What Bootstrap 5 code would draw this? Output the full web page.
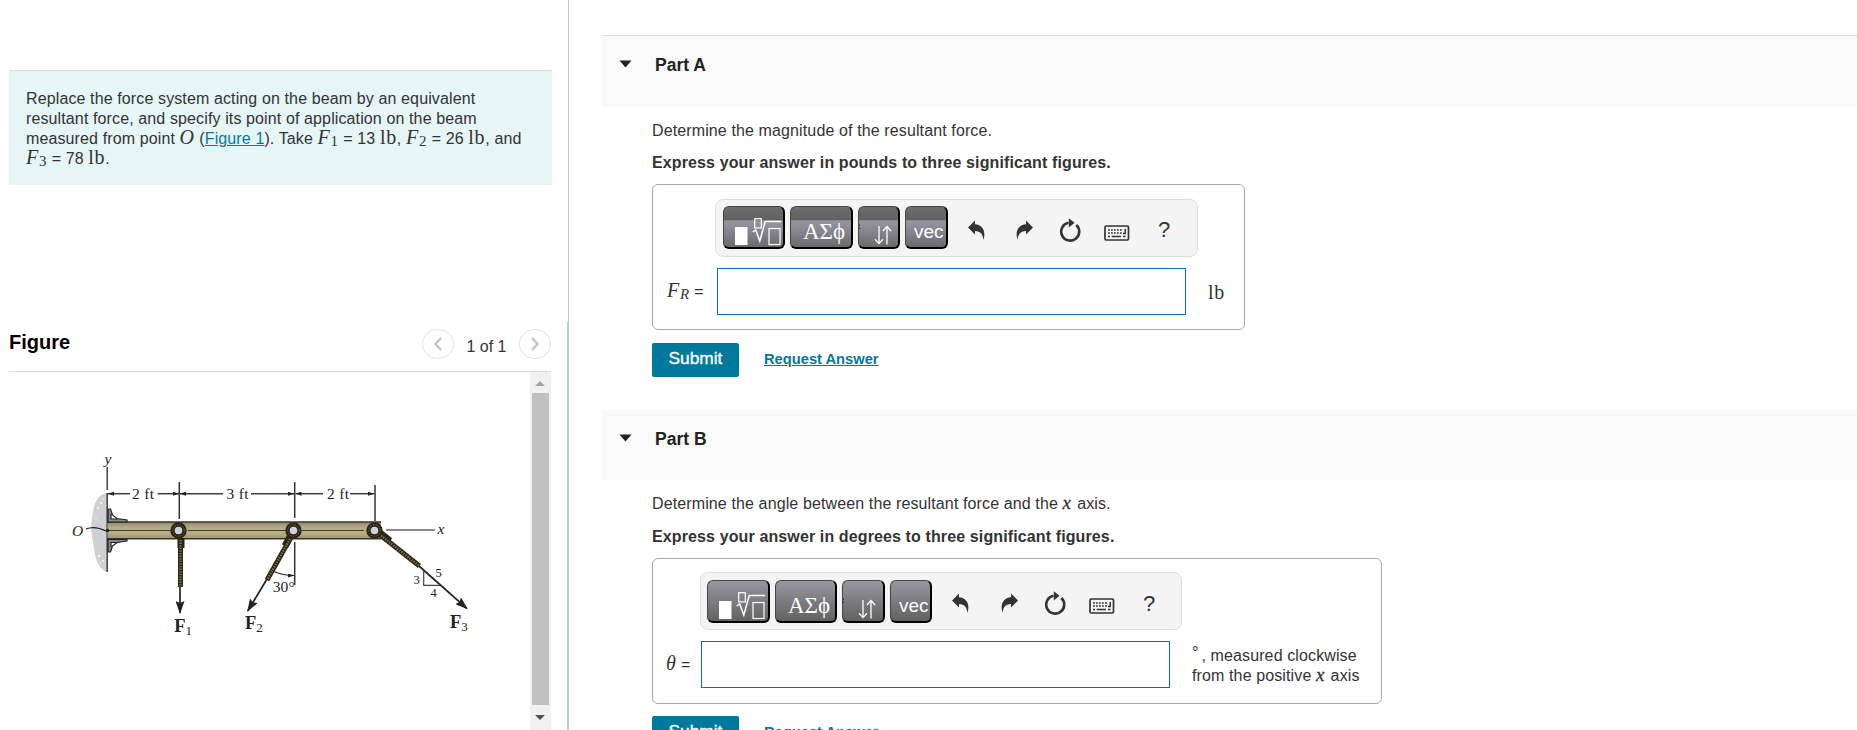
<!DOCTYPE html>
<html lang="en">
<head>
  <meta charset="UTF-8" />
  <title>Equivalent Resultant Force</title>
  <meta name="viewport" content="width=device-width, initial-scale=1.0" />
  <link rel="stylesheet" href="https://cdn.jsdelivr.net/npm/bootstrap@5.3.0/dist/css/bootstrap.min.css" />
  <style>
    body {
      font-family: "Liberation Sans", Arial, sans-serif;
      font-size: 16px;
      line-height: 20px;
      letter-spacing: 0.12px;
      color: #333;
      background: #fff;
    }
    svg { display: block; flex: none; }
    sub { font-size: 0.75em; bottom: -0.16em; }

    /* left column */
    .left-pane { width: 569px; padding: 70px 0 0 9px; border-right: 1px solid #b9cade; }
    .problem {
      width: 543px;
      height: 115px;
      padding: 18px 16px 18px 17px;
      border-top: 1px solid #dcdcdc;
      background: #e6f6f6;
      white-space: nowrap;
    }
    .math { font-family: "Liberation Serif", "Times New Roman", serif; font-size: 20px; line-height: 16px; letter-spacing: 0.7px; }
    .math-it { font-style: italic; }
    .math-x { font-size: 19px; letter-spacing: 1.6px; -webkit-text-stroke: 0.3px #333; }
    .link-teal { color: #007a9c; text-decoration: underline; }
    .figure-side { margin: 137px -1px 0 0; height: 408px; border-right: 2px solid #b9cade; }
    .figure-head { width: 542px; height: 50px; border-bottom: 1px solid #dcdcdc; }
    .figure-title { font-size: 20px; line-height: 24px; font-weight: 700; color: #000; letter-spacing: 0; margin-top: 8px; }
    .pager { margin-top: 7px; height: 31px; }
    .page-btn { width: 32px; height: 30px; border: 1px solid #e3e3e3; border-radius: 50%; background: #fff; padding: 0; }
    .page-count { width: 65px; padding-top: 8px; letter-spacing: 0; }
    .figure-body { width: 542px; height: 358px; }
    .scroll-track { width: 21px; background: #f1f1f1; padding: 21px 2px 0; position: relative; }
    .scroll-thumb { height: 312px; background: #c1c1c1; }
    .arrow-up, .arrow-down { position: absolute; left: 5px; border: 5px solid transparent; }
    .arrow-up { top: 4px; border-bottom-color: #a3a3a3; }
    .arrow-down { bottom: 5px; border-top-color: #505050; }

    /* right column */
    .right-pane { padding: 35px 0 0 33px; min-width: 0; }
    .part-head { height: 72px; padding: 24px 0 0 17px; background: #f9f9f9; border-top: 1px solid #dcdcdc; }
    .part-head-b { height: 70px; border-top: 0; }
    .part-head h2 { font-size: 17.5px; line-height: 20px; font-weight: 700; color: #222; margin: -5px 0 0 23px; letter-spacing: 0; }
    .part-body { padding-left: 50px; }
    .answer-box { height: 146px; border: 1px solid #a8a8a8; border-radius: 6px; padding: 14px 0 0 13px; }
    .box-a { width: 593px; }
    .box-b { width: 730px; padding-top: 13px; }
    .math-toolbar { height: 58px; border: 1px solid #dedede; border-radius: 8px; background: #f4f4f4; padding: 6px 0 0 7px; }
    .tool-btn {
      height: 43px;
      flex: none;
      padding: 0;
      overflow: hidden;
      border: 1px solid;
      border-color: #444 #000 #000 #444;
      border-width: 1px 2px 2px 1px;
      border-radius: 6px;
      color: #fff;
      text-align: left;
      letter-spacing: 0;
      background: linear-gradient(#9896a1, #626262);
      white-space: nowrap;
    }
    .box-a .tool-btn { background: linear-gradient(#6e6e6e 0, #606060 33%, #9896a1 34%, #6c6a6f 100%); }
    .greek { font-family: "Liberation Serif", serif; font-size: 23px; line-height: 25px; padding: 8px 0 0 12px; }
    .vec-btn { font-size: 19px; line-height: 20px; padding: 10px 0 0 8px; }
    .help-sign { font-size: 22px; line-height: 22px; letter-spacing: 0; margin: 13px 0 0 28px; color: #333; }
    .answer-input { width: 469px; height: 47px; border: 1px solid #007a9c; border-radius: 0; padding: 0 8px; outline: 0; }
    .submit-btn {
      width: 87px;
      height: 34px;
      padding: 0 0 4px;
      border: 0;
      border-radius: 2px;
      background: #007a9c;
      color: #fff;
      font-size: 17.3px;
      letter-spacing: 0;
      -webkit-text-stroke: 0.35px #fff;
    }
    .request-link { font-size: 14.7px; font-weight: 700; letter-spacing: 0; margin: 6px 0 0 25px; }
  </style>
</head>
<body class="overflow-hidden">
  <svg width="0" height="0" class="position-absolute">
    <defs>
      <symbol id="icon-root" viewBox="0 0 60 40">
        <rect x="11" y="20" width="12.5" height="18" fill="#fff" />
        <rect x="30.7" y="11.7" width="6.6" height="9.2" fill="none" stroke="#fff" stroke-width="1.2" />
        <path d="M28.8 24.8 L31.7 22.9 L35.8 34 L41.2 14.5 H57" fill="none" stroke="#fff" stroke-width="1.5" />
        <rect x="45" y="21.5" width="11" height="16" fill="none" stroke="#fff" stroke-width="1.2" />
      </symbol>
      <symbol id="icon-updown" viewBox="0 0 39 40">
        <path d="M20 19 V36 M16 32.3 L20 36.6 L24 32.3 M28 37.5 V19.5 M24 24 L28 19.4 L32 24" fill="none" stroke="#fff" stroke-width="1.3" />
        <path d="M0.5 17.5 V19 M0.5 20.5 V22" stroke="#333" />
      </symbol>
      <symbol id="icon-undo" viewBox="0 0 17 21">
        <path d="M0 7.4 L7 0.4 V4.3 C14 4.6 18.6 11 15.3 20 C15 14.5 12.8 11 7 11 V14.6 Z" fill="#333" />
      </symbol>
      <symbol id="icon-reset" viewBox="0 0 22 24">
        <path d="M17.3 7 A9 9 0 1 1 9.5 4.8" fill="none" stroke="#333" stroke-width="2.6" />
        <path d="M9.8 0.3 L15.6 4.8 L9.8 9.4 Z" fill="#333" />
      </symbol>
      <symbol id="icon-keys" viewBox="0 0 26 16">
        <rect x="1" y="1" width="23.5" height="14" rx="1.2" fill="none" stroke="#333" stroke-width="1.7" />
        <path d="M4 5 H19 M4 8 H18" stroke="#333" stroke-width="1.6" stroke-dasharray="1.8 1.2" />
        <path d="M4 11.5 H6 M7.7 11.5 H17 M19 11.5 H21.5 M21.2 4 V8.6 H19" fill="none" stroke="#333" stroke-width="1.5" />
      </symbol>
      <marker id="tip" viewBox="0 0 13 9" refX="12" refY="4.5" markerWidth="13" markerHeight="9" markerUnits="userSpaceOnUse" orient="auto">
        <path d="M0 0 L13 4.5 L0 9 L2 4.5 Z" fill="#222" />
      </marker>
      <marker id="dim" viewBox="0 0 6 4" refX="6" refY="2" markerWidth="6" markerHeight="4" markerUnits="userSpaceOnUse" orient="auto-start-reverse">
        <path d="M0 0 L6 2 L0 4 Z" fill="#222" />
      </marker>
      <linearGradient id="wood" x1="0" y1="0" x2="0" y2="1">
        <stop offset="0" stop-color="#8f8768" />
        <stop offset="0.3" stop-color="#b3aa84" />
        <stop offset="0.65" stop-color="#b9b08a" />
        <stop offset="1" stop-color="#9a9170" />
      </linearGradient>
    </defs>
  </svg>

  <div class="d-flex vh-100 overflow-hidden">
    <div class="left-pane flex-shrink-0">
      <div class="problem">
        Replace the force system acting on the beam by an equivalent<br />
        resultant force, and specify its point of application on the beam<br />
        measured from point <span class="math math-it">O</span> (<a href="#" class="link-teal">Figure 1</a>). Take <span class="math"><i>F</i><sub>1</sub></span> = 13 <span class="math">lb</span>, <span class="math"><i>F</i><sub>2</sub></span> = 26 <span class="math">lb</span>, and<br />
        <span class="math"><i>F</i><sub>3</sub></span> = 78 <span class="math">lb</span>.
      </div>

      <div class="figure-side">
        <div class="figure-head d-flex justify-content-between">
          <div class="figure-title">Figure</div>
          <div class="pager d-flex">
            <button class="page-btn d-flex align-items-center justify-content-center"><svg width="10" height="16" fill="none" stroke="#c4c4c4" stroke-width="2.4"><path d="M8 2 L2.5 8 L8 14" /></svg></button>
            <div class="page-count text-center">1 of 1</div>
            <button class="page-btn d-flex align-items-center justify-content-center"><svg width="10" height="16" fill="none" stroke="#c4c4c4" stroke-width="2.4"><path d="M2 2 L7.5 8 L2 14" /></svg></button>
          </div>
        </div>
        <div class="figure-body d-flex">
          <!-- beam with three loads -->
          <svg width="521" height="358" viewBox="9 372 521 358" font-family="Liberation Serif, serif" letter-spacing="0" fill="#222">
            <path d="M107 493 C98 494 94 503 92.500 515 C90 528 92 538 94 548 C95 560 100 570 107 572 Z" fill="#cfd0d2" />
            <g fill="#fff"><circle cx="101" cy="503" r="1" /><circle cx="98" cy="508" r="1" /><circle cx="103" cy="499" r=".7" /><circle cx="99" cy="556" r="1.200" /><circle cx="103" cy="561" r=".9" /><circle cx="100" cy="563" r=".7" /><circle cx="96" cy="518" r=".7" /></g>
            <path d="M107.200 467 V490 M107.200 493 V572" stroke="#333" stroke-width="1.400" />
            <rect x="107.500" y="522" width="273.500" height="17" fill="url(#wood)" />
            <path d="M107 522 H381 M107 538.700 H381" stroke="#3a352c" stroke-width="1.500" />
            <path d="M108 530.500 H170 M188 530.500 H286 M302 530.500 H364" stroke="#45403a" stroke-width="1.200" />
            <path d="M386 530 H435" stroke="#666" stroke-width="1.600" />
            <!-- wall brackets -->
            <g fill="#85888d" stroke="#222" stroke-width="1.200">
              <path d="M108 509 H110.500 L112.500 515 L117 518.500 L127 520 V522 H108 Z M111 514 V519 H118" />
              <path d="M108 552 H110.500 L112.500 546 L117 542.500 L127 541 V539.500 H108 Z M111 547 V542.500 H118" />
            </g>
            <path d="M86 529 C93 526 100 528 106 531" fill="none" stroke="#222" stroke-width="1.200" />
            <circle cx="107.500" cy="530.500" r="1.800" />
            <!-- dimensions -->
            <g stroke="#333" stroke-width="1.500">
              <path d="M179.300 482 V519 M294.700 482 V518 M375 485 V521 M294.700 542 V585" />
              <g stroke="#33424d">
                <path d="M130 493.700 H108" marker-end="url(#dim)" /><path d="M157.500 493.700 H179" marker-end="url(#dim)" />
                <path d="M223 493.700 H180" marker-end="url(#dim)" /><path d="M251 493.700 H294" marker-end="url(#dim)" />
                <path d="M323 493.700 H295.500" marker-end="url(#dim)" /><path d="M350 493.700 H374" marker-end="url(#dim)" />
              </g>
            </g>
            <!-- ropes -->
            <g fill="none">
              <g stroke="#2b2418" stroke-width="5"><path d="M180.500 540 V587" /><path d="M290 539 L267 580" /><path d="M379 534 L419.500 566" /></g>
              <g stroke="#2b2418" stroke-width="7"><path d="M181 538 V548" /><path d="M290 537 L285 546" /><path d="M380 533 L390 541" /></g>
              <g stroke="#8c7a4a" stroke-width="2.200" stroke-dasharray="1.300 1.300"><path d="M180.500 540 V587" /><path d="M290 539 L267 580" /><path d="M379 534 L419.500 566" /></g>
            </g>
            <g fill="#cdd5dc" stroke="#2b2418" stroke-width="4.400">
              <circle cx="178.500" cy="530.500" r="6" /><circle cx="293.500" cy="530.500" r="6" /><circle cx="374.500" cy="530.500" r="6" />
            </g>
            <g fill="none" stroke="#8c7a4a" stroke-dasharray="1.200 1.600">
              <circle cx="178.500" cy="530.500" r="5.800" /><circle cx="293.500" cy="530.500" r="5.800" /><circle cx="374.500" cy="530.500" r="5.800" />
            </g>
            <g stroke="#222" stroke-width="1.700">
              <path d="M180 587 V613" marker-end="url(#tip)" />
              <path d="M267 579 L247.700 611" marker-end="url(#tip)" />
              <path d="M419 566 L467 608.700" marker-end="url(#tip)" />
            </g>
            <path d="M274 571.500 Q283 575.500 294 575.500" fill="none" stroke="#222" stroke-width="1.200" marker-end="url(#dim)" />
            <path d="M423.700 570.700 V585.300 H440" fill="none" stroke="#444" stroke-width="1.200" />
            <g font-size="15.500">
              <text x="132" y="498.700" textLength="22">2 ft</text>
              <text x="226.500" y="498.700" textLength="22">3 ft</text>
              <text x="327" y="498.700" textLength="22">2 ft</text>
              <text x="272.700" y="592" textLength="22">30°</text>
              <g font-style="italic"><text x="104.500" y="464">y</text><text x="437.500" y="534">x</text><text x="72" y="536">O</text></g>
            </g>
            <g font-size="12.500"><text x="413.500" y="583.500">3</text><text x="435.500" y="577">5</text><text x="430.500" y="597">4</text></g>
            <g font-size="18.500">
              <text x="174.300" y="631.500"><tspan font-weight="700">F</tspan><tspan font-size="13" dy="3">1</tspan></text>
              <text x="245" y="629"><tspan font-weight="700">F</tspan><tspan font-size="13" dy="3">2</tspan></text>
              <text x="450" y="628"><tspan font-weight="700">F</tspan><tspan font-size="13" dy="3">3</tspan></text>
            </g>
          </svg>
          <div class="scroll-track">
            <div class="arrow-up"></div>
            <div class="scroll-thumb"></div>
            <div class="arrow-down"></div>
          </div>
        </div>
      </div>
    </div>

    <div class="right-pane flex-grow-1">
      <div class="part-head d-flex align-items-start">
        <svg width="13" height="8" fill="#222"><path d="M0.500 0.500 H12.500 L6.500 7.500 Z" /></svg>
        <h2>Part A</h2>
      </div>
      <div class="part-body" style="height: 303px">
        <div style="padding-top: 14px">Determine the magnitude of the resultant force.</div>
        <div class="fw-bold" style="padding-top: 12px">Express your answer in pounds to three significant figures.</div>
        <div class="answer-box box-a" style="margin-top: 11px">
          <div class="math-toolbar d-flex align-items-start" style="width: 483px; margin-left: 49px">
            <button class="tool-btn" style="width: 62px"><svg width="60" height="40"><use href="#icon-root" /></svg></button>
            <button class="tool-btn greek" style="width: 63px; margin-left: 5px">ΑΣϕ</button>
            <button class="tool-btn" style="width: 42px; margin-left: 5px"><svg width="39" height="40"><use href="#icon-updown" /></svg></button>
            <button class="tool-btn vec-btn" style="width: 43px; margin-left: 5px">vec</button>
            <svg width="17" height="21" style="margin: 14px 0 0 20px"><use href="#icon-undo" /></svg>
            <svg width="17" height="21" style="margin: 14px 0 0 31px; transform: scaleX(-1)"><use href="#icon-undo" /></svg>
            <svg width="22" height="24" style="margin: 12px 0 0 26px"><use href="#icon-reset" /></svg>
            <svg width="26" height="16" style="margin: 19px 0 0 23px"><use href="#icon-keys" /></svg>
            <span class="help-sign">?</span>
          </div>
          <div class="d-flex align-items-center" style="margin-top: 11px">
            <div style="width: 51px; padding-left: 1px"><span class="math"><i>F</i><sub><i>R</i></sub></span> =</div>
            <input class="answer-input" type="text" aria-label="Resultant force" />
            <span class="math" style="margin-left: 22px">lb</span>
          </div>
        </div>
        <div class="d-flex align-items-start" style="margin-top: 13px">
          <button class="submit-btn">Submit</button>
          <a href="#" class="request-link link-teal">Request Answer</a>
        </div>
      </div>

      <div class="part-head part-head-b d-flex align-items-start">
        <svg width="13" height="8" fill="#222"><path d="M0.500 0.500 H12.500 L6.500 7.500 Z" /></svg>
        <h2>Part B</h2>
      </div>
      <div class="part-body">
        <div style="padding-top: 14px">Determine the angle between the resultant force and the <span class="math math-it math-x">x</span> axis.</div>
        <div class="fw-bold" style="padding-top: 13px">Express your answer in degrees to three significant figures.</div>
        <div class="answer-box box-b" style="margin-top: 11px">
          <div class="math-toolbar d-flex align-items-start" style="width: 482px; margin-left: 34px; padding-left: 6px; padding-top: 7px">
            <button class="tool-btn" style="width: 63px"><svg width="60" height="40"><use href="#icon-root" /></svg></button>
            <button class="tool-btn greek" style="width: 62px; margin-left: 5px">ΑΣϕ</button>
            <button class="tool-btn" style="width: 43px; margin-left: 5px"><svg width="39" height="40"><use href="#icon-updown" /></svg></button>
            <button class="tool-btn vec-btn" style="width: 42px; margin-left: 5px">vec</button>
            <svg width="17" height="21" style="margin: 13px 0 0 20px"><use href="#icon-undo" /></svg>
            <svg width="17" height="21" style="margin: 13px 0 0 32px; transform: scaleX(-1)"><use href="#icon-undo" /></svg>
            <svg width="22" height="24" style="margin: 11px 0 0 26px"><use href="#icon-reset" /></svg>
            <svg width="26" height="16" style="margin: 18px 0 0 23px"><use href="#icon-keys" /></svg>
            <span class="help-sign">?</span>
          </div>
          <div class="d-flex align-items-center" style="margin-top: 11px">
            <div style="width: 35px; white-space: nowrap"><span class="math math-it">θ</span> =</div>
            <input class="answer-input" type="text" aria-label="Angle" />
            <div style="margin-left: 22px; padding-top: 2px"><span style="position: relative; top: -3px; letter-spacing: 3px">°</span>, measured clockwise<br />from the positive <span class="math math-it math-x">x</span> axis</div>
          </div>
        </div>
        <div class="d-flex align-items-start" style="margin-top: 12px">
          <button class="submit-btn">Submit</button>
          <a href="#" class="request-link link-teal">Request Answer</a>
        </div>
      </div>
    </div>
  </div>
  <script src="https://cdn.jsdelivr.net/npm/bootstrap@5.3.0/dist/js/bootstrap.bundle.min.js"></script>
</body>
</html>
